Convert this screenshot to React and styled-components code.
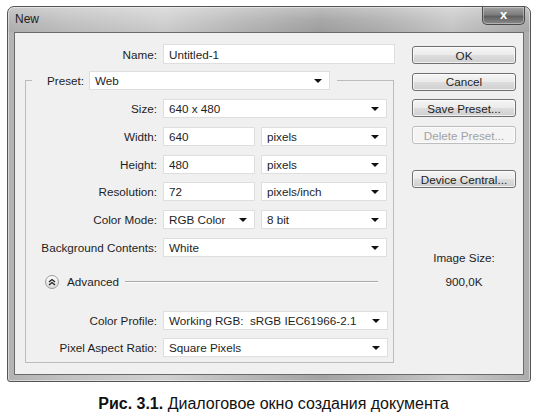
import React from 'react';
import styled, { createGlobalStyle } from 'styled-components';

const Global = createGlobalStyle`
  html, body { margin: 0; padding: 0; background: #ffffff; }
  body { font-family: "Liberation Sans", Arial, sans-serif; color: #1e1e1e; }
  * { box-sizing: border-box; }
`;

const Page = styled.div`
  width: 540px;
  height: 418px;
  padding: 6px 0 0 7px;
  display: flex;
  flex-direction: column;
`;

const Window = styled.div`
  width: 524px;
  height: 376px;
  border: 1px solid #555;
  border-radius: 7px 7px 3px 3px;
  padding: 0 6px 6px 6px;
  display: flex;
  flex-direction: column;
  background: linear-gradient(90deg, #b3b3b3 0%, #c2c2c2 12%, #d0d0d0 30%, #b8b8b8 45%, #a3a3a3 60%, #b2b2b2 72%, #c9c9c9 85%, #acacac 100%);
  box-shadow: inset 0 0 0 1px rgba(255, 255, 255, 0.45);
`;

const TitleBar = styled.div`
  height: 25px;
  margin: 0 -6px;
  padding: 0 5px 0 7px;
  display: flex;
  justify-content: space-between;
  align-items: flex-start;
  background: linear-gradient(180deg, rgba(255,255,255,0.3) 0%, rgba(255,255,255,0.06) 50%, rgba(0,0,0,0.04) 100%);
  border-radius: 6px 6px 0 0;
`;

const Title = styled.span`
  font-size: 12px;
  line-height: 25px;
  color: #222;
`;

const CloseBtn = styled.div`
  width: 43px;
  height: 18px;
  border: 1px solid #4a4a4a;
  border-top: none;
  border-radius: 0 0 5px 5px;
  background: linear-gradient(180deg, #a3a3a3 0%, #7d7d7d 45%, #5f5f5f 55%, #8a8a8a 100%);
  box-shadow: inset 0 0 0 1px rgba(255,255,255,0.35);
  display: flex;
  align-items: center;
  justify-content: center;
  color: #fff;
  font-weight: bold;
  font-size: 13px;
  line-height: 1;
  padding-bottom: 2px;
`;

const Client = styled.div`
  flex: 1;
  border: 1px solid #6a6a6a;
  background: #f0f0f0;
  display: grid;
  grid-template-columns: 380px 104px;
  column-gap: 17px;
  align-items: start;
`;

const LeftCol = styled.div`
  padding-top: 11px;
  display: flex;
  flex-direction: column;
`;

const Row = styled.div`
  display: flex;
  align-items: center;
  gap: 6px;
  height: ${p => p.$h || 19}px;
`;

const Label = styled.span`
  width: ${p => p.$w}px;
  text-align: right;
  font-size: 11.7px;
  color: #1e1e1e;
  white-space: nowrap;
`;

const Field = styled.div`
  width: ${p => p.$w}px;
  height: 100%;
  background: #fff;
  border: 1px solid #dedede;
  display: flex;
  align-items: center;
  justify-content: space-between;
  padding: 0 7px 0 5px;
  font-size: 11.7px;
  color: #1e1e1e;
  white-space: nowrap;
`;

const Arrow = styled.span`
  width: 0;
  height: 0;
  border-left: 4px solid transparent;
  border-right: 4px solid transparent;
  border-top: 4px solid #111;
  margin-top: 1px;
`;

const Group = styled.fieldset`
  margin: 7px 0 0 10px;
  width: 369px;
  padding: 9px 0 5px 0;
  border: 1px solid #bcbcbc;
  min-width: 0;
`;

const Legend = styled.legend`
  margin-left: 6px;
  padding: 0 7px 0 15px;
  display: flex;
  align-items: center;
  gap: 5px;
  height: 19px;
`;

const Rows = styled.div`
  display: flex;
  flex-direction: column;
  gap: ${p => p.$gap}px;
`;

const AdvancedRow = styled.div`
  display: flex;
  align-items: center;
  height: 19px;
  margin: 15.5px 15px 19.5px 19px;
`;

const Toggle = styled.span`
  width: 14px;
  height: 14px;
  border-radius: 50%;
  border: 1px solid #9a9a9a;
  background: linear-gradient(180deg, #fdfdfd, #dcdcdc);
  display: flex;
  align-items: center;
  justify-content: center;
  margin-right: 8px;
`;

const AdvText = styled.span`
  font-size: 11.7px;
  color: #1e1e1e;
  margin-right: 6px;
`;

const Rule = styled.span`
  flex: 1;
  height: 2px;
  border-top: 1px solid #a8a8a8;
  border-bottom: 1px solid #fff;
`;

const RightCol = styled.div`
  padding-top: 13px;
  display: flex;
  flex-direction: column;
  align-items: stretch;
`;

const Buttons = styled.div`
  display: flex;
  flex-direction: column;
  gap: 8.7px;
`;

const Button = styled.div`
  height: 18px;
  border: 1px solid ${p => (p.$disabled ? '#bdbdbd' : '#707070')};
  border-radius: 3px;
  background: ${p => (p.$disabled ? '#f4f4f4' : 'linear-gradient(180deg, #f6f6f6 0%, #ebebeb 48%, #dddddd 52%, #cfcfcf 100%)')};
  box-shadow: inset 0 0 0 1px rgba(255,255,255,0.7);
  display: flex;
  align-items: center;
  justify-content: center;
  font-size: 11.7px;
  color: ${p => (p.$disabled ? '#a3a3a3' : '#1e1e1e')};
  margin-top: ${p => p.$mt || 0}px;
`;

const Info = styled.div`
  margin-top: 63px;
  display: flex;
  flex-direction: column;
  align-items: center;
  gap: 10px;
  font-size: 11.7px;
  line-height: 14px;
  color: #1e1e1e;
`;

const Caption = styled.div`
  margin-top: 13px;
  width: 533px;
  text-align: center;
  font-size: 16px;
  color: #111;
  b { font-weight: bold; }
`;

function Select({ w, children }) {
  return (
    <Field $w={w}>
      <span>{children}</span>
      <Arrow />
    </Field>
  );
}

function Input({ w, children }) {
  return (
    <Field $w={w}>
      <span>{children}</span>
    </Field>
  );
}

function ChevronsUp() {
  return (
    <svg width="8" height="8" viewBox="0 0 8 8">
      <path d="M1 4 L4 1.5 L7 4 M1 7 L4 4.5 L7 7" fill="none" stroke="#222" strokeWidth="1.3" />
    </svg>
  );
}

export default function App() {
  return (
    <>
      <Global />
      <Page>
        <Window>
          <TitleBar>
            <Title>New</Title>
            <CloseBtn>x</CloseBtn>
          </TitleBar>
          <Client>
            <LeftCol>
              <Row $h={20}>
                <Label $w={142}>Name:</Label>
                <Input w={232}>Untitled-1</Input>
              </Row>
              <Group>
                <Legend>
                  <Label>Preset:</Label>
                  <Select w={241}>Web</Select>
                </Legend>
                <Rows $gap={8.8}>
                  <Row>
                    <Label $w={131}>Size:</Label>
                    <Select w={224}>640 x 480</Select>
                  </Row>
                  <Row>
                    <Label $w={131}>Width:</Label>
                    <Input w={92}>640</Input>
                    <Select w={126}>pixels</Select>
                  </Row>
                  <Row>
                    <Label $w={131}>Height:</Label>
                    <Input w={92}>480</Input>
                    <Select w={126}>pixels</Select>
                  </Row>
                  <Row>
                    <Label $w={131}>Resolution:</Label>
                    <Input w={92}>72</Input>
                    <Select w={126}>pixels/inch</Select>
                  </Row>
                  <Row>
                    <Label $w={131}>Color Mode:</Label>
                    <Select w={92}>RGB Color</Select>
                    <Select w={126}>8 bit</Select>
                  </Row>
                  <Row>
                    <Label $w={131}>Background Contents:</Label>
                    <Select w={224}>White</Select>
                  </Row>
                </Rows>
                <AdvancedRow>
                  <Toggle><ChevronsUp /></Toggle>
                  <AdvText>Advanced</AdvText>
                  <Rule />
                </AdvancedRow>
                <Rows $gap={8}>
                  <Row>
                    <Label $w={131}>Color Profile:</Label>
                    <Select w={225}>Working RGB:&nbsp; sRGB IEC61966-2.1</Select>
                  </Row>
                  <Row>
                    <Label $w={131}>Pixel Aspect Ratio:</Label>
                    <Select w={225}>Square Pixels</Select>
                  </Row>
                </Rows>
              </Group>
            </LeftCol>
            <RightCol>
              <Buttons>
                <Button>OK</Button>
                <Button>Cancel</Button>
                <Button>Save Preset...</Button>
                <Button $disabled>Delete Preset...</Button>
                <Button $mt={17.3}>Device Central...</Button>
              </Buttons>
              <Info>
                <span>Image Size:</span>
                <span>900,0K</span>
              </Info>
            </RightCol>
          </Client>
        </Window>
        <Caption><b>Рис. 3.1.</b> Диалоговое окно создания документа</Caption>
      </Page>
    </>
  );
}
